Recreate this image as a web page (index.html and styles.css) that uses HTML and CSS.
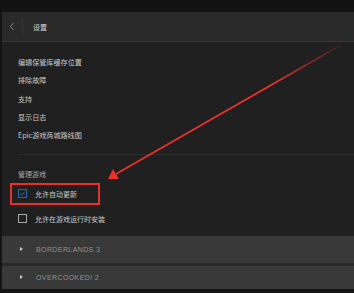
FILE: index.html
```html
<!DOCTYPE html>
<html lang="zh-CN">
<head>
    <meta charset="UTF-8">
    <meta name="viewport" content="width=device-width, initial-scale=1.0">
    <title>设置</title>
    <link rel="stylesheet" href="styles.css">
</head>
<body>
    <div class="topbar"></div>
    <div class="panel">
        <div class="header">
            <span class="back">
                <svg width="6" height="9" viewBox="0 0 6 9"><path d="M4.5 1 L1.5 4.5 L4.5 8" fill="none" stroke="#8a8a8a" stroke-width="1"/></svg>
            </span>
            <span class="sep"></span>
            <span class="title">设置</span>
        </div>

        <ul class="menu">
            <li>编辑保管库缓存位置</li>
            <li>排除故障</li>
            <li>支持</li>
            <li>显示日志</li>
            <li>Epic游戏商城路线图</li>
        </ul>

        <div class="divider"></div>

        <div class="section">
            <p class="section-title">管理游戏</p>
            <label class="check-row">
                <span class="box checked">
                    <svg width="7" height="7" viewBox="0 0 7 7"><path d="M1.2 3.8 L2.8 5.3 L5.8 1.6" fill="none" stroke="#2e64a8" stroke-width="1"/></svg>
                </span>
                允许自动更新
            </label>
            <label class="check-row">
                <span class="box"></span>
                允许在游戏运行时安装
            </label>
        </div>

        <div class="games">
            <div class="game"><span class="tri"></span>BORDERLANDS 3</div>
            <div class="game last"><span class="tri"></span>OVERCOOKED! 2</div>
        </div>
    </div>

    <!-- 标注：红框和箭头 -->
    <svg class="note" width="354" height="293" viewBox="0 0 354 293">
        <defs>
            <linearGradient id="fade" x1="341" y1="45" x2="109" y2="178" gradientUnits="userSpaceOnUse">
                <stop offset="0" stop-color="#e8302c" stop-opacity="0.1"/>
                <stop offset="0.3" stop-color="#e8302c" stop-opacity="1"/>
                <stop offset="1" stop-color="#e8302c" stop-opacity="1"/>
            </linearGradient>
        </defs>
        <rect x="11" y="184" width="88" height="20" fill="none" stroke="#e8302c" stroke-width="2"/>
        <line x1="341" y1="45" x2="116" y2="174" stroke="url(#fade)" stroke-width="2"/>
        <polygon points="108,179 113,169 119,179" fill="#e8302c"/>
    </svg>
</body>
</html>
```

FILE: styles.css
```css
body{
    margin:0;
    background:#141414;
    font-family:"Noto Sans CJK SC","Noto Sans",sans-serif;
    color:#c8c8c8;
    overflow:hidden;
}
.topbar{
    height:12px;
    background:#121212;
}
.panel{
    margin-left:2px;
    background:#202020;
}
.header{
    height:29px;
    background:#2a2a2a;
    border-bottom:1px solid #363636;
    display:flex;
    align-items:center;
}
.back{
    width:20px;
    display:flex;
    justify-content:center;
}
.back svg{
    display:block;
}
.sep{
    width:1px;
    height:17px;
    background:#353535;
}
.title{
    margin-left:10px;
    font-size:7px;
    color:#d8d8d8;
}
.menu{
    list-style:none;
    margin:0;
    padding:11px 0 0 16px;
}
.menu li{
    height:18.3px;
    line-height:18.3px;
    font-size:7.1px;
}
.divider{
    margin:10px 0 0 16px;
    height:1px;
    background:#2b2b2b;
}
.section{
    padding:13px 0 4.5px 16px;
}
.section-title{
    margin:0;
    height:13px;
    line-height:13px;
    font-size:7px;
    color:#a8a8a8;
}
.check-row{
    display:flex;
    align-items:center;
    height:25px;
    font-size:7px;
}
.box{
    width:7px;
    height:7px;
    border:1px solid #a8a8a8;
    margin-right:8px;
    display:flex;
    align-items:center;
    justify-content:center;
}
.box.checked{
    border-color:#2e64a8;
}
.box svg{
    display:block;
}
.games{
    background:#282828;
}
.game{
    height:27px;
    margin-bottom:3px;
    background:#393939;
    display:flex;
    align-items:center;
    font-family:"Liberation Sans",Arial,sans-serif;
    font-size:7px;
    letter-spacing:0.4px;
    color:#929292;
}
.game.last{
    margin-bottom:0;
    height:23px;
}
.tri{
    width:0;
    height:0;
    border-left:3px solid #c8c8c8;
    border-top:2px solid transparent;
    border-bottom:2px solid transparent;
    margin:0 13px 0 18px;
}
.note{
    position:absolute;
    left:0;
    top:0;
    pointer-events:none;
}
```
